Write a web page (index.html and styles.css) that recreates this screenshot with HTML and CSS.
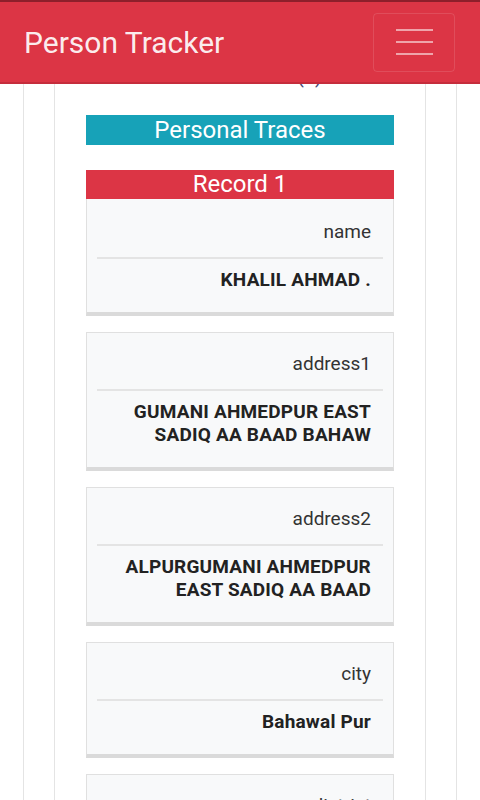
FILE: index.html
```html
<!DOCTYPE html>
<html>
<head>
<meta charset="utf-8">
<link rel="stylesheet" href="styles.css">
</head>
<body>
<header class="navbar">
  <span class="brand">Person Tracker</span>
  <button class="toggler" aria-label="menu">
    <span class="bar"></span><span class="bar"></span><span class="bar"></span>
  </button>
</header>
<main class="outer">
  <div class="inner">
    <div class="peek"><span class="peek-text">Total Records (1)</span></div>
    <div class="section-title">Personal Traces</div>
    <div class="record-title">Record 1</div>
    <div class="card first">
      <div class="label">name</div>
      <div class="divider"></div>
      <div class="value">KHALIL AHMAD .</div>
    </div>
    <div class="card">
      <div class="label">address1</div>
      <div class="divider"></div>
      <div class="value">GUMANI AHMEDPUR EAST<br>SADIQ AA BAAD BAHAW</div>
    </div>
    <div class="card">
      <div class="label">address2</div>
      <div class="divider"></div>
      <div class="value">ALPURGUMANI AHMEDPUR<br>EAST SADIQ AA BAAD</div>
    </div>
    <div class="card">
      <div class="label">city</div>
      <div class="divider"></div>
      <div class="value">Bahawal Pur</div>
    </div>
    <div class="card">
      <div class="label">district</div>
      <div class="divider"></div>
      <div class="value">Bahawal Pur</div>
    </div>
  </div>
</main>
</body>
</html>
```
FILE: styles.css
```css
html, body {
  margin: 0;
  padding: 0;
  background: #fff;
  font-family: Roboto, "Liberation Sans", Arial, sans-serif;
  color: #212529;
}
.navbar {
  position: fixed;
  top: 0;
  left: 0;
  right: 0;
  height: 80px;
  background: #dc3545;
  border-top: 2px solid #8e1f2b;
  border-bottom: 2px solid #c52d3c;
  display: flex;
  align-items: center;
  justify-content: space-between;
  padding: 0 25px 0 24px;
  z-index: 10;
}
.brand {
  color: rgba(255, 255, 255, 0.92);
  font-size: 30px;
  line-height: 1;
  margin-top: 2px;
}
.toggler {
  width: 82px;
  height: 59px;
  background: transparent;
  border: 1px solid rgba(255, 255, 255, 0.12);
  border-radius: 4px;
  display: flex;
  flex-direction: column;
  align-items: center;
  justify-content: center;
  gap: 10px;
  padding: 0;
}
.bar {
  display: block;
  width: 37px;
  height: 2px;
  background: rgba(255, 255, 255, 0.55);
}
.outer {
  margin: 0 23px;
  border-left: 1px solid #e4e4e4;
  border-right: 1px solid #e4e4e4;
  padding: 0 30px;
  min-height: 800px;
}
.inner {
  border-left: 1px solid #e4e4e4;
  border-right: 1px solid #e4e4e4;
  padding: 0 31px;
  min-height: 800px;
}
.peek {
  height: 92px;
  display: flex;
  justify-content: flex-end;
  align-items: flex-end;
  padding-right: 72px;
  overflow: hidden;
}
.peek-text {
  font-size: 20px;
  line-height: 20px;
  color: #4a4a78;
  margin-bottom: 6px;
}
.section-title {
  margin-top: 23px;
  height: 30px;
  line-height: 30px;
  background: #17a2b8;
  color: #fff;
  text-align: center;
  font-size: 24px;
}
.record-title {
  margin-top: 25px;
  height: 29px;
  line-height: 28px;
  background: #dc3545;
  color: #fff;
  text-align: center;
  font-size: 24px;
}
.card {
  background: #f8f9fa;
  border: 1px solid #e0e0e0;
  border-bottom: 4px solid #dadada;
  padding: 18px 10px 21px;
  margin-top: 16px;
  text-align: right;
}
.card.first {
  margin-top: 0;
  border-top: none;
  padding-top: 20px;
  padding-bottom: 21px;
}
.label {
  font-size: 19px;
  line-height: 26px;
  color: #333;
  padding-right: 12px;
}
.divider {
  height: 2px;
  background: #e4e4e4;
  margin: 12px 0 9px;
}
.value {
  font-size: 19px;
  line-height: 23px;
  font-weight: bold;
  letter-spacing: 0.2px;
  color: #222;
  padding-right: 12px;
}
```
